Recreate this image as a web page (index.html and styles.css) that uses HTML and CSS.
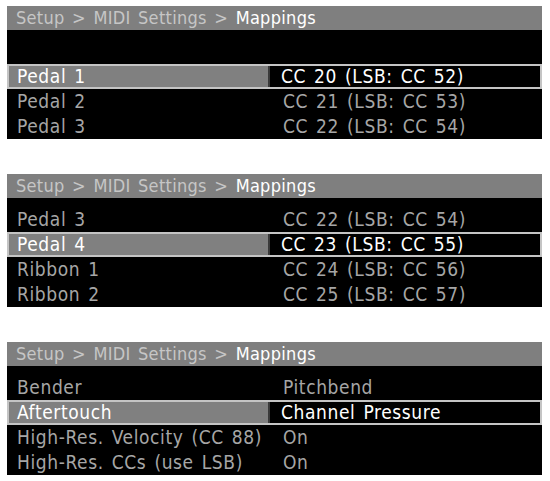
FILE: index.html
```html
<!DOCTYPE html>
<html>
  <head>
    <meta charset="utf-8">
    <title>MIDI Mappings</title>
    <link rel="stylesheet" href="styles.css">
  </head>
<body>

  <div class="screen">
    <div class="crumb"><span class="path">Setup &gt; MIDI Settings &gt; </span><span class="here">Mappings</span></div>
    <div class="list">
      <div class="row"><span class="key"></span><span class="val"></span></div>
      <div class="row sel"><span class="key">Pedal 1</span><span class="val">CC 20 (LSB: CC 52)</span></div>
      <div class="row"><span class="key">Pedal 2</span><span class="val">CC 21 (LSB: CC 53)</span></div>
      <div class="row"><span class="key">Pedal 3</span><span class="val">CC 22 (LSB: CC 54)</span></div>
    </div>
  </div>

  <div class="screen">
    <div class="crumb"><span class="path">Setup &gt; MIDI Settings &gt; </span><span class="here">Mappings</span></div>
    <div class="list">
      <div class="row"><span class="key">Pedal 3</span><span class="val">CC 22 (LSB: CC 54)</span></div>
      <div class="row sel"><span class="key">Pedal 4</span><span class="val">CC 23 (LSB: CC 55)</span></div>
      <div class="row"><span class="key">Ribbon 1</span><span class="val">CC 24 (LSB: CC 56)</span></div>
      <div class="row"><span class="key">Ribbon 2</span><span class="val">CC 25 (LSB: CC 57)</span></div>
    </div>
  </div>

  <div class="screen">
    <div class="crumb"><span class="path">Setup &gt; MIDI Settings &gt; </span><span class="here">Mappings</span></div>
    <div class="list">
      <div class="row"><span class="key">Bender</span><span class="val">Pitchbend</span></div>
      <div class="row sel"><span class="key">Aftertouch</span><span class="val">Channel Pressure</span></div>
      <div class="row"><span class="key">High-Res. Velocity (CC 88)</span><span class="val">On</span></div>
      <div class="row"><span class="key">High-Res. CCs (use LSB)</span><span class="val">On</span></div>
    </div>
  </div>

</body>
</html>
```

FILE: styles.css
```css
html
{
  background-color: #ffffff;
}
body
{
  margin: 0;
  padding: 6px 0 0 0;
  display: flex;
  flex-direction: column;
  gap: 35px;
  font-family: "DejaVu Sans Condensed", "DejaVu Sans", sans-serif;
}
.screen
{
  width: 535px;
  margin-left: 7px;
  background-color: #000000;
}
.crumb
{
  height: 24px;
  line-height: 24px;
  background-color: #7f7f7f;
  padding-left: 9px;
  font-size: 18px;
  letter-spacing: 0.3px;
  word-spacing: 2px;
  white-space: nowrap;
}
.path
{
  color: #c6c6c6;
}
.here
{
  color: #ffffff;
}
.list
{
  padding-top: 9px;
}
.row
{
  display: flex;
  height: 25px;
  line-height: 24px;
  font-size: 19px;
  letter-spacing: 0.6px;
  word-spacing: 2px;
  color: #a6a6a6;
  white-space: nowrap;
}
.key
{
  width: 263px;
  padding-left: 10px;
  box-sizing: border-box;
}
.val
{
  flex: 1;
  padding-left: 13px;
}
.sel
{
  border: 2px solid #c4c4c4;
  box-sizing: border-box;
  line-height: 21px;
  color: #ffffff;
}
.sel .key
{
  width: 261px;
  padding-left: 8px;
  background-color: #808080;
  border-right: 2px solid #3a3a3a;
}
.sel .val
{
  padding-left: 11px;
}
```
